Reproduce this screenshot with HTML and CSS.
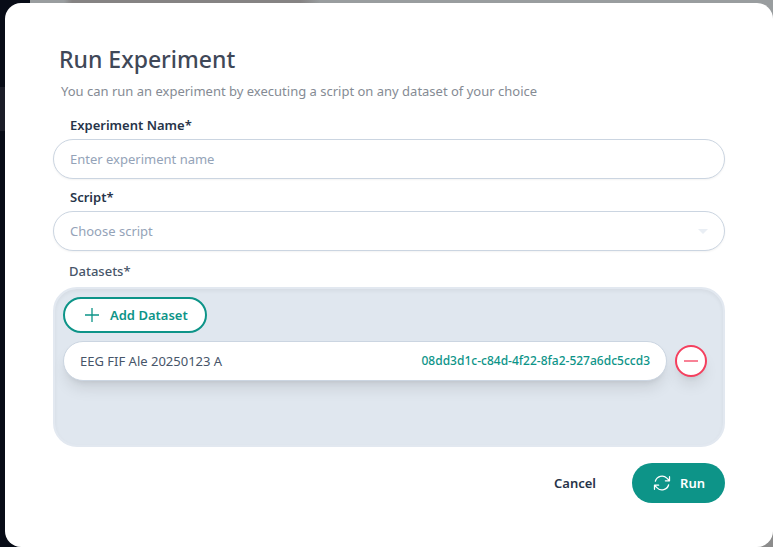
FILE: index.html
```html
<!DOCTYPE html>
<html lang="en">
<head>
    <meta charset="UTF-8">
    <meta name="viewport" content="width=device-width, initial-scale=1.0">
    <title>Run Experiment</title>
    <link rel="stylesheet" href="styles.css">
</head>
<body>

<main class="modal">
    <header class="modal-header">
        <h1>Run Experiment</h1>
        <p>You can run an experiment by executing a script on any dataset of your choice</p>
    </header>

    <form id="experimentForm">
        <label class="label" for="experimentName">Experiment Name*</label>
        <input class="field" type="text" id="experimentName" placeholder="Enter experiment name">

        <label class="label" for="script">Script*</label>
        <div class="select-wrap">
            <select class="field" id="script">
                <option value="">Choose script</option>
            </select>
            <svg class="caret" width="10" height="5" viewBox="0 0 10 5"><path d="M0 0h10L5 5z" fill="currentColor"/></svg>
        </div>

        <h2 class="datasets-title">Datasets*</h2>
        <section class="datasets">
            <button type="button" class="add-btn">
                <svg width="16" height="16" viewBox="0 0 16 16" fill="none" stroke="currentColor"><path d="M8 1v14M1 8h14" stroke-width="1.3"/></svg>
                Add Dataset
            </button>
            <div class="dataset-row">
                <div class="dataset">
                    <span>EEG FIF Ale 20250123 A</span>
                    <span class="dataset-id">08dd3d1c-c84d-4f22-8fa2-527a6dc5ccd3</span>
                </div>
                <button type="button" class="remove-btn" aria-label="Remove dataset">
                    <svg width="16" height="16" viewBox="0 0 16 16" fill="none" stroke="currentColor"><path d="M1 8h14" stroke-width="1.3"/></svg>
                </button>
            </div>
        </section>

        <footer class="actions">
            <button type="button" class="cancel-btn">Cancel</button>
            <button type="submit" class="run-btn">
                <svg width="20" height="20" viewBox="0 0 24 24" fill="none" stroke="currentColor" stroke-width="1.5" stroke-linecap="round" stroke-linejoin="round"><path d="M16.023 9.348h4.992v-.001M2.985 19.644v-4.992m0 0h4.992m-4.993 0 3.181 3.183a8.25 8.25 0 0 0 13.803-3.7M4.031 9.865a8.25 8.25 0 0 1 13.803-3.7l3.181 3.182m0-4.991v4.99"/></svg>
                Run
            </button>
        </footer>
    </form>
</main>

</body>
</html>
```
FILE: styles.css
```css
* {
    box-sizing: border-box;
}
body {
    margin: 0;
    padding: 3px 0 0 5px;
    min-height: 100vh;
    display: flex;
    font-family: "Segoe UI", "Noto Sans", sans-serif;
    font-size: 13px;
    line-height: 20px;
    color: #475569;
    /* dimmed sidebar with its active item, then the page behind the dialog */
    background:
        linear-gradient(#1b1d28, #1b1d28) 0 87px / 30px 44px no-repeat,
        linear-gradient(#080c17, #080c17) 0 0 / 30px 100% no-repeat,
        linear-gradient(90deg, #999d9f 64px, #858383 72px, #858383 300px, #999d9f 320px) 0 0 / 100% 40px no-repeat,
        #8c8c8c;
}
button, input, select {
    font: inherit;
}
button {
    cursor: pointer;
}
h1, h2, p {
    margin: 0;
}
.modal {
    flex: 1;
    padding: 40px 48px;
    background: #fff;
    border-radius: 16px;
}
.modal-header {
    padding: 0 6px;
}
h1 {
    font-size: 23px;
    font-weight: 500;
    line-height: 32px;
    color: #3f4858;
}
.modal-header p {
    margin: 6px 2px 14px;
    color: #858b94;
}
.label {
    display: block;
    padding: 0 17px 4px;
    font-weight: 600;
    color: #273449;
}
.field {
    display: block;
    width: 100%;
    height: 40px;
    margin-bottom: 8px;
    padding: 0 16px;
    border: 1px solid #cbd5e1;
    border-radius: 20px;
    background: #fff;
    box-shadow: 0 1px 2px rgba(0, 0, 0, 0.05);
    color: #94a3b8;
    appearance: none;
}
.field::placeholder {
    color: #94a3b8;
    opacity: 1;
}
.select-wrap {
    position: relative;
}
.caret {
    position: absolute;
    right: 17px;
    top: 18px;
    color: #e9eef4;
    pointer-events: none;
}
.datasets-title {
    padding: 2px 16px 6px;
    font-size: 13px;
    font-weight: 500;
}
.datasets {
    min-height: 160px;
    padding: 8px;
    border: 2px solid #e2e8f0;
    border-radius: 24px;
    background: #e0e7ef;
    box-shadow: inset 0 2px 4px rgba(0, 0, 0, 0.05);
}
.add-btn {
    display: flex;
    align-items: center;
    gap: 10px;
    height: 36px;
    padding: 0 17px 0 19px;
    border: 2px solid #0d9488;
    border-radius: 18px;
    background: #fff;
    color: #0d9488;
    font-weight: 600;
}
.dataset-row {
    display: flex;
    align-items: center;
    gap: 8px;
    margin-top: 8px;
    padding-right: 8px;
}
.dataset {
    flex: 1;
    display: flex;
    align-items: center;
    justify-content: space-between;
    height: 40px;
    padding: 0 16px;
    border: 1px solid #cbd5e1;
    border-radius: 20px;
    background: #fff;
    box-shadow: 0 10px 15px -3px rgba(0, 0, 0, 0.1), 0 4px 6px -4px rgba(0, 0, 0, 0.1);
}
.dataset-id {
    font-size: 12px;
    font-weight: 500;
    color: #0d9488;
}
.remove-btn {
    display: flex;
    align-items: center;
    justify-content: center;
    width: 32px;
    height: 32px;
    padding: 0;
    border: 2px solid #f43f5e;
    border-radius: 50%;
    background: #fff;
    color: #f43f5e;
    box-shadow: 0 10px 15px -3px rgba(0, 0, 0, 0.1), 0 4px 6px -4px rgba(0, 0, 0, 0.1);
}
.actions {
    display: flex;
    justify-content: flex-end;
    gap: 20px;
    margin-top: 16px;
}
.cancel-btn, .run-btn {
    display: flex;
    align-items: center;
    gap: 8px;
    height: 40px;
    border: none;
    border-radius: 20px;
    font-weight: 600;
}
.cancel-btn {
    padding: 0 16px;
    background: none;
    color: #273449;
}
.run-btn {
    padding: 0 20px;
    background: #0d9488;
    color: #fff;
}
```
